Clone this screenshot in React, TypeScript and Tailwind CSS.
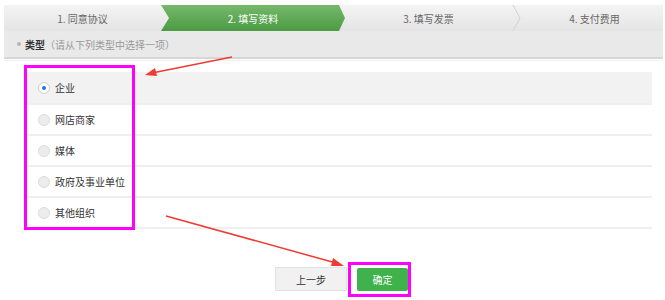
import React from "react";

const font = { fontFamily: '"Microsoft YaHei", "Noto Sans CJK SC", sans-serif' };

const options = ["企业", "网店商家", "媒体", "政府及事业单位", "其他组织"];

function Steps() {
  return (
    <div className="relative ml-[4px] mr-[2px] flex h-[26px] mt-[5px] bg-gradient-to-b from-[#f4f4f4] to-[#e4e4e4] text-[10px] text-[#666]">
      <div className="flex w-[157px] items-center justify-center">1. 同意协议</div>
      <div
        className="flex w-[184px] items-center justify-center bg-gradient-to-b from-[#74b96a] to-[#4c9a44] text-white"
        style={{ clipPath: "polygon(0 0, calc(100% - 6px) 0, 100% 50%, calc(100% - 6px) 100%, 0 100%, 8px 50%)" }}
      >
        2. 填写资料
      </div>
      <div className="flex w-[167px] items-center justify-center">3. 填写发票</div>
      <div className="relative flex flex-1 items-center justify-center pl-[14px]">
        <svg className="absolute left-0 top-0 h-[26px] w-[10px]" viewBox="0 0 10 26">
          <path d="M1 0 L8 13 L1 26" fill="none" stroke="#d2d2d2" strokeWidth="1" />
        </svg>
        4. 支付费用
      </div>
    </div>
  );
}

function Radio({ checked }: { checked: boolean }) {
  return checked ? (
    <span className="flex h-[12px] w-[12px] items-center justify-center rounded-full border border-[#cfcfcf] bg-white">
      <span className="h-[4px] w-[4px] rounded-full bg-[#1e7be0]" />
    </span>
  ) : (
    <span className="h-[12px] w-[12px] rounded-full border border-[#dcdcdc] bg-[#ececec]" />
  );
}

export default function App() {
  return (
    <div className="relative h-[300px] w-[665px] overflow-hidden bg-white" style={font}>
      <Steps />
      <div className="ml-[4px] mr-[2px] flex h-[28px] items-center border-b-2 border-[#d6d6d6] bg-[#e9e9ea] pl-[13px] text-[10px]">
        <span className="mr-[4px] h-[4px] w-[4px] rounded-full bg-[#b5b5b5]" />
        <span className="font-bold text-[#333]">类型</span>
        <span className="text-[#999]">（请从下列类型中选择一项）</span>
      </div>
      <div className="ml-[4px] mr-[2px] h-[1px] bg-[#f1f1f1] mt-[1px]" />

      <div className="ml-[26px] mr-[13px] mt-[11px]">
        {options.map((o, i) => (
          <div
            key={o}
            className={
              "flex h-[31px] items-center gap-[5px] pl-[12px] text-[10px] text-[#333] " +
              (i === 0 ? "bg-[#f2f2f2]" : "border-t-2 border-[#efefef]")
            }
          >
            <Radio checked={i === 0} />
            <span>{o}</span>
          </div>
        ))}
        <div className="h-[2px] bg-[#efefef]" />
      </div>

      <div className="mt-[38px] flex justify-center gap-[10px] pl-[18px]">
        <button className="h-[24px] w-[72px] border border-[#e2e2e2] bg-[#f1f1f1] text-[10px] text-[#333]">上一步</button>
        <button className="mt-[1px] h-[23px] w-[51px] rounded-[2px] bg-[#3fb24b] text-[10px] text-white">确定</button>
      </div>

      {/* annotation overlay */}
      <div className="pointer-events-none absolute left-[24px] top-[65px] h-[165px] w-[111px] border-[3px] border-[#ff00ff]" />
      <div className="pointer-events-none absolute left-[348px] top-[262px] h-[35px] w-[63px] border-[3px] border-[#ff00ff]" />
      <svg className="pointer-events-none absolute left-0 top-0" width="665" height="300">
        <line x1="232" y1="57" x2="152" y2="73" stroke="#ee3a32" strokeWidth="1.5" />
        <polygon points="145,75 155,68 157,76" fill="#ee3a32" />
        <line x1="166" y1="216" x2="336" y2="263" stroke="#ee3a32" strokeWidth="1.5" />
        <polygon points="344,266 333,258 331,266" fill="#ee3a32" />
      </svg>
    </div>
  );
}
